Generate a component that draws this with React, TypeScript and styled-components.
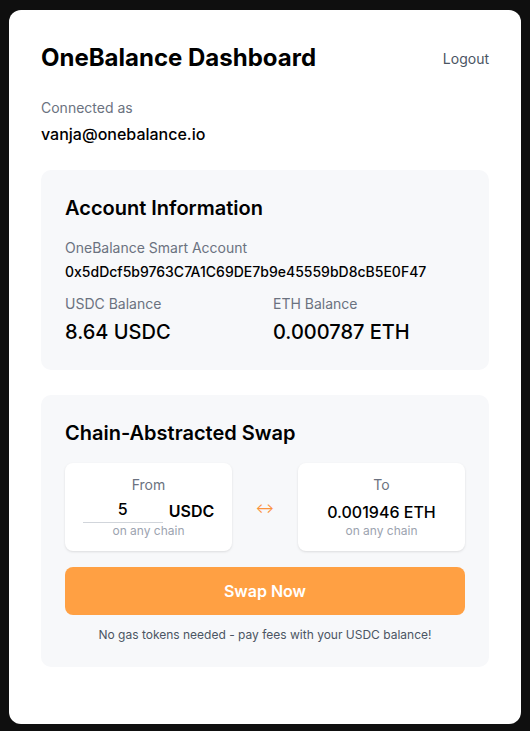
import { useState } from "react";
import styled, { createGlobalStyle } from "styled-components";

const GlobalStyle = createGlobalStyle`
  html, body {
    margin: 0;
    padding: 0;
    background: #0f0f0f;
    font-family: Inter, "Noto Sans", Arial, sans-serif;
    color: #111;
  }
  * {
    box-sizing: border-box;
  }
`;

export default function App() {
  const [amount, setAmount] = useState("5");

  return (
    <Page>
      <GlobalStyle />
      <Card>
        <Header>
          <Title>OneBalance Dashboard</Title>
          <LogoutButton>Logout</LogoutButton>
        </Header>

        <Label>Connected as</Label>
        <Email>vanja@onebalance.io</Email>

        <Section>
          <SectionTitle>Account Information</SectionTitle>
          <Label $top={16}>OneBalance Smart Account</Label>
          <Address>0x5dDcf5b9763C7A1C69DE7b9e45559bD8cB5E0F47</Address>
          <BalanceGrid>
            <div>
              <Label>USDC Balance</Label>
              <BalanceValue>8.64 USDC</BalanceValue>
            </div>
            <div>
              <Label>ETH Balance</Label>
              <BalanceValue>0.000787 ETH</BalanceValue>
            </div>
          </BalanceGrid>
        </Section>

        <Section>
          <SectionTitle>Chain-Abstracted Swap</SectionTitle>
          <SwapRow>
            <TokenBox>
              <TokenLabel>From</TokenLabel>
              <AmountRow>
                <AmountInput
                  value={amount}
                  onChange={(e) => setAmount(e.target.value)}
                />
                <TokenSymbol>USDC</TokenSymbol>
              </AmountRow>
              <ChainHint>on any chain</ChainHint>
            </TokenBox>
            <SwapArrow>↔</SwapArrow>
            <TokenBox>
              <TokenLabel>To</TokenLabel>
              <OutputValue>0.001946 ETH</OutputValue>
              <ChainHint>on any chain</ChainHint>
            </TokenBox>
          </SwapRow>
          <SwapButton>Swap Now</SwapButton>
          <Note>No gas tokens needed - pay fees with your USDC balance!</Note>
        </Section>
      </Card>
    </Page>
  );
}

const Page = styled.div`
  padding: 10px 9px 9px;
`;

const Card = styled.div`
  max-width: 512px;
  min-height: 712px;
  margin: 0 auto;
  background: #ffffff;
  border-radius: 12px;
  padding: 32px;
`;

const Header = styled.div`
  display: flex;
  justify-content: space-between;
  align-items: center;
  margin-bottom: 24px;
`;

const Title = styled.h1`
  margin: 0;
  font-size: 24px;
  line-height: 32px;
  font-weight: 700;
  color: #000;
`;

const LogoutButton = styled.button`
  border: none;
  background: none;
  padding: 0;
  font-family: inherit;
  font-size: 14px;
  color: #4b5563;
  cursor: pointer;
`;

const Label = styled.div<{ $top?: number }>`
  margin-top: ${(p) => p.$top ?? 0}px;
  font-size: 14px;
  line-height: 20px;
  color: #6b7280;
`;

const Email = styled.div`
  margin-top: 4px;
  font-size: 16px;
  line-height: 24px;
  font-weight: 500;
  color: #000;
  margin-bottom: 24px;
`;

const Section = styled.div`
  background: #f7f8fa;
  border-radius: 10px;
  padding: 24px;
  margin-bottom: 25px;
`;

const SectionTitle = styled.h2`
  margin: 0;
  font-size: 20px;
  line-height: 28px;
  font-weight: 600;
  color: #000;
`;

const Address = styled.div`
  margin-top: 4px;
  font-size: 14px;
  line-height: 20px;
  font-weight: 500;
  color: #000;
`;

const BalanceGrid = styled.div`
  display: grid;
  grid-template-columns: 1fr 1fr;
  gap: 16px;
  margin-top: 12px;
`;

const BalanceValue = styled.div`
  margin-top: 4px;
  font-size: 20px;
  line-height: 28px;
  font-weight: 500;
  color: #000;
`;

const SwapRow = styled.div`
  display: grid;
  grid-template-columns: 1fr auto 1fr;
  align-items: center;
  gap: 16px;
  margin-top: 16px;
`;

const TokenBox = styled.div`
  background: #ffffff;
  border-radius: 8px;
  padding: 12px;
  box-shadow: 0 1px 3px rgba(0, 0, 0, 0.08), 0 1px 2px rgba(0, 0, 0, 0.04);
  display: flex;
  flex-direction: column;
  align-items: center;
`;

const TokenLabel = styled.div`
  font-size: 14px;
  line-height: 20px;
  color: #6b7280;
`;

const AmountRow = styled.div`
  display: flex;
  align-items: center;
  gap: 6px;
  margin-top: 4px;
`;

const AmountInput = styled.input`
  width: 80px;
  border: none;
  border-bottom: 1px solid #d1d5db;
  background: transparent;
  text-align: center;
  font-family: inherit;
  font-size: 16px;
  font-weight: 500;
  line-height: 20px;
  padding: 0 0 3px;
  color: #000;
  outline: none;
`;

const TokenSymbol = styled.span`
  font-size: 16px;
  font-weight: 600;
  color: #000;
`;

const OutputValue = styled.div`
  margin-top: 6px;
  font-size: 16px;
  line-height: 22px;
  font-weight: 500;
  color: #000;
`;

const ChainHint = styled.div`
  font-size: 12px;
  line-height: 16px;
  color: #9ca3af;
`;

const SwapArrow = styled.div`
  width: 34px;
  text-align: center;
  font-size: 14px;
  color: #fb923c;
`;

const SwapButton = styled.button`
  display: block;
  width: 100%;
  height: 48px;
  margin-top: 16px;
  border: none;
  border-radius: 8px;
  background: #ffa043;
  color: #ffffff;
  font-family: inherit;
  font-size: 16px;
  font-weight: 600;
  cursor: pointer;
`;

const Note = styled.p`
  margin: 12px 0 0;
  text-align: center;
  font-size: 12px;
  line-height: 16px;
  color: #4b5563;
`;
